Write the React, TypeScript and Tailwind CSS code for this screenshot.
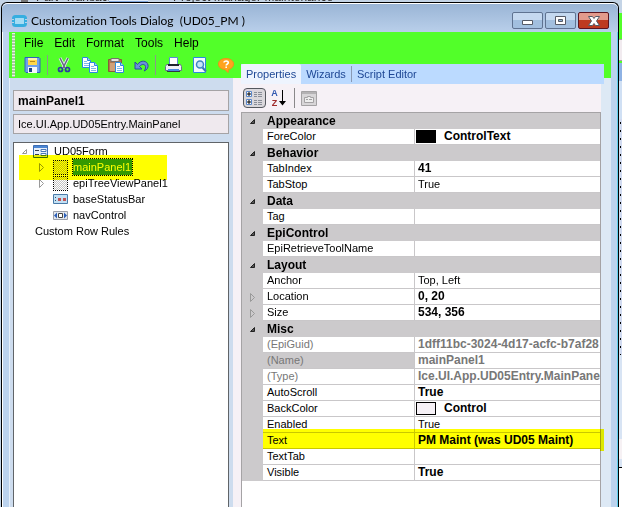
import React, { useState } from 'react'

const Expander = ({ open, dark }: { open?: boolean; dark?: boolean }) => (
  <svg width="9" height="9" viewBox="0 0 9 9" className="shrink-0">
    {open ? (
      <path d="M6.5 2.5v4h-4z" fill={dark ? '#555' : '#fff'} stroke={dark ? '#222' : '#999'} />
    ) : (
      <path d="M2.5 0.5v8l4-4z" fill="none" stroke="#999" />
    )}
  </svg>
)

const SaveIcon = () => (
  <svg width="17" height="16" viewBox="0 0 17 16">
    <path d="M1 .5h14l1 1v14H2l-1-1z" fill="#6ea0ec" stroke="#2e62bc" />
    <path d="M4 1h9v7H4z" fill="#ffd64a" />
    <path d="M4 1h9v2H4z" fill="#fff3b0" />
    <path d="M6 4h5v1H6z" fill="#b98a1a" />
    <path d="M4 10h9v6H4z" fill="#f4f7fc" />
    <path d="M5 11h3v4H5z" fill="#1d3f80" />
  </svg>
)

const CutIcon = () => (
  <svg width="14" height="16" viewBox="0 0 14 16" fill="none">
    <path d="M3 1l5 10M11 1L6 11" stroke="#e4e8f0" strokeWidth="3" />
    <path d="M3 1l5 10M11 1L6 11" stroke="#666a80" strokeWidth="1.5" />
    <circle cx="3.5" cy="12.5" r="2" stroke="#2c3ca0" strokeWidth="1.7" />
    <circle cx="10.5" cy="12.5" r="2" stroke="#2c3ca0" strokeWidth="1.7" />
  </svg>
)

const Sheet = ({ x, y }: { x: number; y: number }) => (
  <g transform={`translate(${x} ${y})`}>
    <path d="M.5 .5h5l3 3v7h-8z" fill="#fff" stroke="#2a8ae0" />
    <path d="M5.5 .5v3h3" fill="#a8d0f4" stroke="#2a8ae0" />
    <path d="M2 4.5h3M2 6.5h5M2 8.500h5" stroke="#7db6ea" />
  </g>
)

const CopyIcon = () => (
  <svg width="17" height="16" viewBox="0 0 17 16">
    <Sheet x={0} y={0} />
    <Sheet x={7} y={5} />
  </svg>
)

const PasteIcon = () => (
  <svg width="17" height="16" viewBox="0 0 17 16">
    <path d="M.5 2.500h13v12H.5z" fill="#b0764e" stroke="#8a5a38" />
    <path d="M3 1.500h8v3H3z" fill="#e6e2e0" stroke="#77706c" />
    <path d="M2 6h10v8H2z" fill="#d0a078" />
    <Sheet x={7} y={5} />
  </svg>
)

const UndoIcon = () => (
  <svg width="15" height="13" viewBox="0 0 15 13">
    <path
      d="M1 3v7h7L5.500 7.500C8 4.500 11 5 11.500 7.500c.2 2-.5 3.500-1.500 4.500 3-1 4.500-3.500 4-6C13 1.500 7 .5 3.500 5.500z"
      fill="#6a90dc"
      stroke="#2b4ba0"
    />
  </svg>
)

const PrintIcon = () => (
  <svg width="17" height="16" viewBox="0 0 17 16">
    <path d="M4.500 .5h8v8h-8z" fill="#fff" stroke="#5c88d8" />
    <path d="M1.500 7.500h14l1 2v4H.5v-4z" fill="#f0f1f6" stroke="#6a7088" />
    <path d="M3 7h11v2H3z" fill="#20242e" />
    <path d="M3 12h11v3H3z" fill="#4c88e0" />
    <path d="M2 14h13v1H2z" fill="#303644" />
  </svg>
)

const PreviewIcon = () => (
  <svg width="14" height="16" viewBox="0 0 14 16" fill="none">
    <path d="M.5 .5h12v15H.5z" fill="#f4faff" stroke="#2a8ae0" />
    <path d="M9.500 10.500l3.500 4" stroke="#3a78b8" strokeWidth="2" />
    <circle cx="7" cy="7.500" r="3.500" fill="#c6e4fa" stroke="#3f86c4" strokeWidth="1.500" />
  </svg>
)

const HelpIcon = () => (
  <svg width="16" height="15" viewBox="0 0 16 15">
    <path
      d="M8 .5c4.500 0 7.500 2.300 7.500 5.500 0 3-2.500 5-5 5.500L10 14.500l-3-3C3 11.500.5 9 .5 6 .5 2.800 3.500.5 8 .5z"
      fill="#ffa31f"
      stroke="#f0901a"
    />
    <path d="M6 4.500C6 2.500 10.500 2.500 10.300 4.800 10.200 6 8.200 6 8.200 7.500M8.200 8.500V10" fill="none" stroke="#fff" strokeWidth="1.600" />
  </svg>
)

const FormIcon = () => (
  <svg width="15" height="13" viewBox="0 0 15 13">
    <path d="M.5 .5h14v12H.5z" fill="#e6effa" stroke="#3c6eb4" />
    <path d="M1 1h13v2H1z" fill="#4b86d4" />
    <path d="M2 5.500h4M2 9.500h4" stroke="#333c50" />
    <path d="M8 4.500h5v2H8zM8 8.500h5v2H8z" fill="#fff" stroke="#4b78b8" />
  </svg>
)

const PanelIcon = () => (
  <svg width="15" height="15" viewBox="0 0 15 15">
    <defs>
      <pattern id="dots" width="2" height="2" patternUnits="userSpaceOnUse">
        <path d="M0 0h1v1H0zM1 1h1v1H1z" fill="#c4c4c4" />
      </pattern>
    </defs>
    <path d="M1 1h13v13H1z" fill="url(#dots)" />
    <path d="M.5 0v15M14.500 0v15M0 .5h15M0 14.500h15" fill="none" stroke="#000" strokeDasharray="1 1" />
  </svg>
)

const StatusBarIcon = () => (
  <svg width="15" height="10" viewBox="0 0 15 10">
    <path d="M.5 .5h14v9H.5z" fill="#c3e0f4" stroke="#4a7ba8" />
    <path d="M2 3h1v1H2zM2 6h1v1H2z" fill="#356" />
    <path d="M5 4h3v3H5zM10 4h3v3h-3z" fill="#c05454" />
  </svg>
)

const NavIcon = () => (
  <svg width="15" height="9" viewBox="0 0 15 9">
    <path d="M.5 .5h14v8H.5z" fill="#e4e8ee" stroke="#9a9ea8" />
    <path d="M4 1.500v6l-3-3zM11 1.500v6l3-3z" fill="#2c5fb8" />
    <path d="M5.500 2.500h4v4h-4z" fill="#fff" stroke="#444" />
  </svg>
)

const CategorizedIcon = () => (
  <svg width="18" height="16" viewBox="0 0 18 16" fill="none">
    <path d="M.5 1.500h5v5h-5zM.5 9.500h5v5h-5z" fill="#fff" stroke="#5a86c8" />
    <path d="M1 4h4M3 2v4M1 12h4M3 10v4" stroke="#000" />
    <path
      d="M8 2.500h3M8 4.500h3M8 6.500h3M8 10.500h3M8 12.500h3M8 14.500h3M12 2.500h4M12 4.500h4M12 6.500h4M12 10.500h4M12 12.500h4M12 14.500h4"
      stroke="#8a8e98"
    />
  </svg>
)

const PagesIcon = () => (
  <svg width="16" height="15" viewBox="0 0 16 15" fill="none">
    <path d="M.5 .5h15v14H.5z" fill="#d8d6d8" stroke="#a4a2a4" />
    <path d="M1 1h14v2H1z" fill="#b4b2b4" />
    <path d="M3.500 11.500v-5h3v-1h3v1h3v5z" fill="#eee" stroke="#a4a2a4" />
    <path d="M5 8.500h2M8 8.500h3" stroke="#a4a2a4" />
  </svg>
)

const tools = [
  { name: 'Save', icon: <SaveIcon />, className: 'ml-[9px] mr-[6px]' },
  { name: 'Cut', icon: <CutIcon />, className: 'border-l border-[#8a9a8a] pl-[9px] mr-[11px]' },
  { name: 'Copy', icon: <CopyIcon />, className: 'mr-[9px]' },
  { name: 'Paste', icon: <PasteIcon />, className: 'mr-[9px]' },
  { name: 'Undo', icon: <UndoIcon />, className: 'mr-[6px]' },
  { name: 'Print', icon: <PrintIcon />, className: 'border-l border-[#8a9a8a] pl-[9px] mr-[11px]' },
  { name: 'Preview', icon: <PreviewIcon />, className: 'mr-[11px]' },
  { name: 'Help', icon: <HelpIcon />, className: '' },
]

const treeItems = [
  { name: 'epiTreeViewPanel1', icon: <PanelIcon />, expandable: true },
  { name: 'baseStatusBar', icon: <StatusBarIcon /> },
  { name: 'navControl', icon: <NavIcon /> },
]

type Prop = {
  name: string
  value?: string
  bold?: boolean
  expandable?: boolean
  readOnly?: boolean
  selected?: boolean
  highlight?: boolean
  swatch?: string
}

const groups: { title: string; props: Prop[] }[] = [
  { title: 'Appearance', props: [{ name: 'ForeColor', value: 'ControlText', bold: true, swatch: 'bg-black' }] },
  { title: 'Behavior', props: [{ name: 'TabIndex', value: '41', bold: true }, { name: 'TabStop', value: 'True' }] },
  { title: 'Data', props: [{ name: 'Tag' }] },
  { title: 'EpiControl', props: [{ name: 'EpiRetrieveToolName' }] },
  {
    title: 'Layout',
    props: [
      { name: 'Anchor', value: 'Top, Left' },
      { name: 'Location', value: '0, 20', bold: true, expandable: true },
      { name: 'Size', value: '534, 356', bold: true, expandable: true },
    ],
  },
  {
    title: 'Misc',
    props: [
      { name: '(EpiGuid)', value: '1dff11bc-3024-4d17-acfc-b7af28', bold: true, readOnly: true },
      { name: '(Name)', value: 'mainPanel1', bold: true, readOnly: true, selected: true },
      { name: '(Type)', value: 'Ice.UI.App.UD05Entry.MainPanel', bold: true, readOnly: true },
      { name: 'AutoScroll', value: 'True', bold: true },
      { name: 'BackColor', value: 'Control', bold: true, swatch: 'bg-[#f6f1f6]' },
      { name: 'Enabled', value: 'True' },
      { name: 'Text', value: 'PM Maint (was UD05 Maint)', bold: true, highlight: true },
      { name: 'TextTab' },
      { name: 'Visible', value: 'True', bold: true },
    ],
  },
]

const PropertyRow = ({ prop }: { prop: Prop }) => (
  <tr className={`relative h-4 ${prop.readOnly ? 'text-[#777]' : 'text-black'}`}>
    <td className="bg-[#cccacc] p-0">
      <div className="flex justify-center">{prop.expandable && <Expander />}</div>
    </td>
    <th
      scope="row"
      className={`border-r border-b border-[#c9c7c9] p-0 pl-1 text-left font-normal ${prop.selected ? 'bg-[#cccacc]' : 'bg-white'}`}
    >
      {prop.name}
    </th>
    <td className="border-b border-[#c9c7c9] bg-white p-0">
      <div
        className={`flex h-[15px] items-center overflow-hidden whitespace-nowrap ${prop.bold ? 'text-[12px] font-bold' : ''} ${
          prop.swatch ? 'gap-2 pl-px' : 'pl-[3px]'
        }`}
      >
        {prop.swatch && <span className={`h-[13px] w-5 border border-black ${prop.swatch}`} />}
        {prop.value}
      </div>
      {prop.highlight && (
        <div className="pointer-events-none absolute -top-1 -right-1 -bottom-0.5 left-[21px] bg-[#ffff00] mix-blend-multiply" />
      )}
    </td>
  </tr>
)

const PropertyGrid = () => (
  <div className="min-h-0 flex-1 border border-b-0 border-[#a5a3a5] bg-white">
    <table className="w-full table-fixed border-separate border-spacing-0 text-[11px] leading-[15px]">
      <colgroup>
        <col className="w-[21px]" />
        <col className="w-[152px]" />
        <col />
      </colgroup>
      {groups.map((group) => (
        <tbody key={group.title}>
          <tr className="h-4 bg-[#cccacc]">
            <td className="p-0">
              <div className="flex justify-center">
                <Expander open dark />
              </div>
            </td>
            <th colSpan={2} className="p-0 pl-1 text-left text-[12px] leading-4 font-bold">
              {group.title}
            </th>
          </tr>
          {group.props.map((prop) => (
            <PropertyRow key={prop.name} prop={prop} />
          ))}
        </tbody>
      ))}
    </table>
  </div>
)

const ObjectTree = () => (
  <div className="min-h-0 flex-1 border border-b-0 border-[#606468] bg-white">
    <ul className="leading-4">
      <li>
        <div className="flex h-4 items-center pl-[6px]">
          <Expander open />
          <span className="ml-1 flex w-[21px]"><FormIcon /></span>
          UD05Form
        </div>
        <ul>
          <li className="relative flex h-4 items-center pl-[23px]">
            <Expander />
            <span className="ml-[7px] flex w-5"><PanelIcon /></span>
            <span className="bg-[#3399ff] pr-px text-white outline outline-dotted outline-black">mainPanel1</span>
            <div className="pointer-events-none absolute -top-1 -bottom-[5px] left-[5px] w-[148px] bg-[#ffff00] mix-blend-multiply" />
          </li>
          {treeItems.map((item) => (
            <li key={item.name} className="flex h-4 items-center pl-[23px]">
              <span className="flex w-[9px]">{item.expandable && <Expander />}</span>
              <span className="ml-[7px] flex w-5">{item.icon}</span>
              {item.name}
            </li>
          ))}
        </ul>
      </li>
      <li className="pl-[21px]">Custom Row Rules</li>
    </ul>
  </div>
)

const WindowButtons = () => (
  <div className="flex gap-[2px]">
    <button
      aria-label="Minimize"
      className="flex h-[17px] w-[31px] items-end justify-center rounded-xs border border-[#5f7391] bg-linear-to-b from-[#c5d9f0] from-50% to-[#a2bfdf] to-50% pb-[3px]"
    >
      <svg width="11" height="5" viewBox="0 0 11 5">
        <path d="M.5 .5h10v4H.5z" fill="#fff" stroke="#555a66" />
      </svg>
    </button>
    <button
      aria-label="Maximize"
      className="flex h-[17px] w-[31px] items-center justify-center rounded-xs border border-[#5f7391] bg-linear-to-b from-[#c5d9f0] from-50% to-[#a2bfdf] to-50%"
    >
      <svg width="11" height="9" viewBox="0 0 11 9">
        <path d="M.5 .5h10v8H.5z" fill="#fff" stroke="#555a66" />
        <path d="M3.500 3.500h4v2h-4z" fill="#8fb0d8" stroke="#555a66" />
      </svg>
    </button>
    <button
      aria-label="Close"
      className="flex h-[17px] w-[31px] items-center justify-center rounded-xs border border-[#5c1420] bg-linear-to-b from-[#e39a8c] from-50% to-[#bd3a20] to-50%"
    >
      <svg width="12" height="10" viewBox="0 0 12 10">
        <path d="M.5 .5h4L6 2.500 7.500 .5h4L8.500 5l3 4.500h-4L6 7.500 4.500 9.500h-4L3.500 5z" fill="#fff" stroke="#555a66" />
      </svg>
    </button>
  </div>
)

// sliver of the parent window that shows past the dialog's right edge
const ParentEdge = () => (
  <div className="flex w-[3px] flex-col bg-white">
    <div className="h-[11px] bg-[#c4d4e6]" />
    <div className="h-[26px] bg-[#52ff29]" />
    <div className="h-[22px] border-y border-[#a8a0a4] bg-[#f1ebef]" />
    <div className="h-[2px] bg-[#52ff29]" />
    <div className="h-[18px] bg-[#8eb2e4]" />
    <div className="h-[38px] bg-[#d0e0f4]" />
    <div className="h-[236px] bg-[#d0daf0] bg-[radial-gradient(circle,#000_1px,transparent_1px)] bg-size-[3px_8px]" />
    <div className="h-[84px] bg-[#d8e4f4]" />
    <div className="h-5 bg-[#f6f1f4]" />
    <div className="h-[9px] border-b border-black bg-[#d8e4f4]" />
  </div>
)

const tabs = ['Properties', 'Wizards', 'Script Editor']

const App: React.FC = () => {
  const [tab, setTab] = useState('Properties')

  return (
    <div className="flex h-screen flex-col overflow-hidden bg-[#c4d4e6] font-['Liberation_Sans',Arial,sans-serif] text-[11px] text-black">
      {/* Bottom edge of the window behind */}
      <div className="flex h-[2px] shrink-0 items-end overflow-hidden text-[12px] leading-[9px] text-[#333]">
        <div className="ml-[21px] h-[2px] w-[7px] bg-[#777]" />
        <span className="ml-2 w-[73px]">Part_Transact</span>
        <div className="h-[2px] w-[39px] border-b border-[#7fa6dc] bg-[#dce8f8]" />
        <span className="ml-[25px]">Project Manager Maintenance</span>
      </div>

      <div className="flex min-h-0 flex-1 pl-px">
        <div className="flex min-w-0 flex-1 flex-col rounded-t-md border border-b-0 border-black bg-[#bcd3ee]">
          {/* Title bar */}
          <div className="flex h-[29px] shrink-0 items-center rounded-t-md border-t border-white bg-linear-to-b from-[#9ab5d6] to-[#b9cfea] pt-[5px] pr-[9px] pl-[10px]">
            <svg width="15" height="12" viewBox="0 0 15 12">
              <rect x="1.500" y="1.500" width="12" height="9" rx="2" fill="#a4dcf4" stroke="#35aee0" strokeWidth="3" />
              <path d="M0 4.500h2M0 7.500h2M13 4.500h2M13 7.500h2" stroke="#b4d4ea" />
            </svg>
            <h1 className="ml-1 flex-1 font-['Lato','Open_Sans',sans-serif] text-[12px] whitespace-pre">
              Customization Tools Dialog  (UD05_PM )
            </h1>
            <WindowButtons />
          </div>

          <div className="flex min-h-0 flex-1 border-x border-l-white border-r-[#5fd0ee] pr-[6px] pl-[6px]">
            {/* Left column: menu, toolbar and object tree */}
            <div className="flex w-[232px] shrink-0 flex-col">
              <div className="flex h-[46px] shrink-0 bg-[#52ff29] pl-[3px]">
                <div className="my-px w-[3px] bg-[repeating-linear-gradient(#e8f4e0_0_1px,#a8c8a0_1px_3px)]" />
                <div className="flex flex-col">
                  <nav className="flex h-[22px] items-center gap-[11px] pl-[9px] text-[12px]">
                    <button>File</button>
                    <button>Edit</button>
                    <button>Format</button>
                    <button>Tools</button>
                    <button>Help</button>
                  </nav>
                  <div className="flex h-[22px] items-center">
                    {tools.map((tool) => (
                      <button key={tool.name} aria-label={tool.name} className={`flex h-5 shrink-0 items-center ${tool.className}`}>
                        {tool.icon}
                      </button>
                    ))}
                  </div>
                </div>
              </div>
              <div className="flex min-h-0 flex-1 border-l border-[#e6f0fa] bg-[#cddcee]">
                <div className="flex min-w-0 flex-1 flex-col pt-3 pr-1 pl-[3px]">
                  <input
                    aria-label="Control name"
                    readOnly
                    value="mainPanel1"
                    className="h-[21px] w-full shrink-0 border border-[#a5a3a5] bg-[#efe9ee] px-1 text-[12px] font-bold"
                  />
                  <input
                    aria-label="Control type"
                    readOnly
                    value="Ice.UI.App.UD05Entry.MainPanel"
                    className="mt-[3px] mb-2 h-5 w-full shrink-0 border border-[#a5a3a5] bg-[#efe9ee] px-1"
                  />
                  <ObjectTree />
                </div>
                <div className="w-2 shrink-0 bg-[#f6f1f6]" />
              </div>
            </div>

            {/* Right column: tabs and property grid */}
            <div className="flex min-w-0 flex-1 flex-col bg-[#dde9f5]">
              <div className="h-8 shrink-0 bg-[#52ff29]" />
              <div role="tablist" className="flex h-5 shrink-0 items-center bg-[#bbdaff] text-[#1e4795]">
                {tabs.map((name) => (
                  <button
                    key={name}
                    role="tab"
                    aria-selected={tab === name}
                    onClick={() => setTab(name)}
                    className={`flex h-5 items-center ${tab === name ? 'rounded-t-xs bg-[#eef4fe]' : ''}`}
                  >
                    {name === 'Script Editor' && <span className="h-4 w-px bg-[#8a9ab4]" />}
                    <span className="px-[5px]">{name}</span>
                  </button>
                ))}
              </div>
              <div className="flex min-h-0 flex-1 flex-col pr-[3px]">
                <div className="flex h-7 shrink-0 items-center bg-[#f6f1f6] pl-[2px]">
                  <button
                    aria-label="Categorized"
                    className="flex h-5 w-[23px] items-center justify-center rounded-sm border border-[#55585e] bg-[#dad8dc]"
                  >
                    <CategorizedIcon />
                  </button>
                  <button aria-label="Alphabetical" className="mr-2 ml-1 flex items-center">
                    <span className="flex w-[9px] flex-col text-[9px] leading-[10px] font-bold">
                      <span className="text-[#3058b0]">A</span>
                      <span className="text-[#a02c2c]">Z</span>
                    </span>
                    <svg width="7" height="16" viewBox="0 0 7 16">
                      <path d="M3 0h1v11h3L3.500 15.500 0 11h3z" />
                    </svg>
                  </button>
                  <div className="mr-[6px] h-5 w-px bg-[#8a888a]" />
                  <button aria-label="Property pages" disabled>
                    <PagesIcon />
                  </button>
                </div>
                <PropertyGrid />
              </div>
            </div>

            <div className="w-[7px] shrink-0 bg-[#dde9f5]">
              <div className="h-[46px] bg-[#52ff29]" />
            </div>
          </div>
        </div>
        <ParentEdge />
      </div>
    </div>
  )
}

export default App
